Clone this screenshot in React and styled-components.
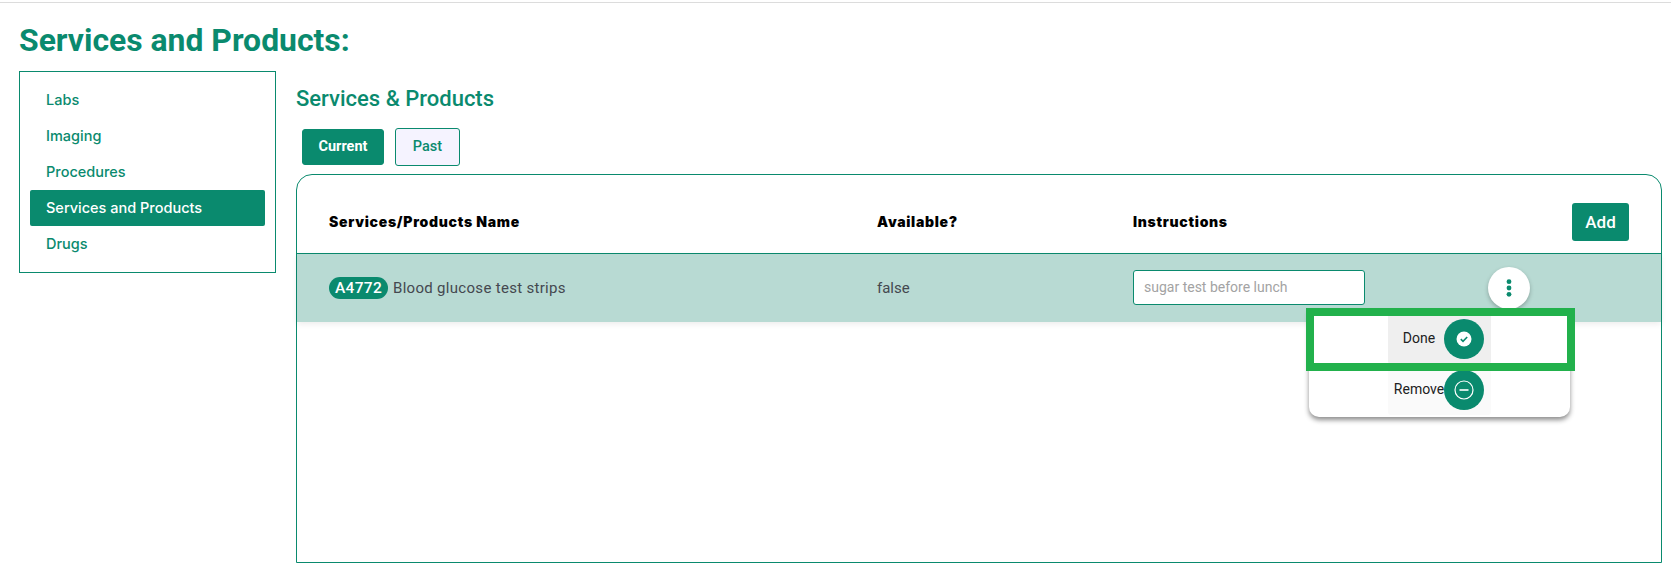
import React from 'react'
import styled, { createGlobalStyle } from 'styled-components'

const teal = '#0a8a6e'

const GlobalStyle = createGlobalStyle`
  html, body {
    margin: 0;
    padding: 0;
    background: #fff;
  }
  body {
    font-family: Roboto, "Liberation Sans", sans-serif;
    overflow: hidden;
  }
`

const Page = styled.div`
  height: 563px;
  box-sizing: border-box;
  margin-top: 2px;
  border-top: 1px solid #dcdcdc;
  padding: 0 9px 0 19px;
  overflow: hidden;
`

const Title = styled.h1`
  margin: 20px 0 0;
  height: 48px;
  font-size: 31.9px;
  line-height: 35px;
  font-weight: 700;
  color: ${teal};
`

const Layout = styled.div`
  display: flex;
  align-items: flex-start;
  gap: 20px;
`

const Sidebar = styled.ul`
  list-style: none;
  margin: 0;
  padding: 10px;
  width: 257px;
  height: 202px;
  box-sizing: border-box;
  border: 1px solid ${teal};
  flex: none;
`

const SideItem = styled.li`
  height: 36px;
  line-height: 36px;
  padding-left: 16px;
  font-family: Inter, "Open Sans", sans-serif;
  font-size: 14.5px;
  font-weight: 500;
  border-radius: 2px;
  color: ${p => (p.$active ? '#fff' : teal)};
  background: ${p => (p.$active ? teal : 'transparent')};
`

const Main = styled.div`
  flex: 1;
  min-width: 0;
`

const Heading = styled.h2`
  margin: 14px 0 0;
  height: 43px;
  font-size: 22px;
  line-height: 28px;
  font-weight: 500;
  color: ${teal};
`

const Tabs = styled.div`
  display: flex;
  align-items: center;
  gap: 11px;
  padding-left: 6px;
  height: 38px;
`

const Tab = styled.button`
  box-sizing: border-box;
  height: ${p => (p.$active ? '36px' : '38px')};
  width: ${p => (p.$active ? '82px' : '65px')};
  border: 1px solid ${teal};
  border-radius: 3px;
  padding: 0 0 2px;
  font-family: Roboto, sans-serif;
  font-size: 14.5px;
  font-weight: ${p => (p.$active ? 700 : 500)};
  color: ${p => (p.$active ? '#fff' : teal)};
  background: ${p => (p.$active ? teal : '#f5f3ff')};
`

const Card = styled.div`
  margin-top: 8px;
  height: 389px;
  box-sizing: border-box;
  border: 1px solid ${teal};
  border-radius: 16px 16px 0 0;
`

const HeaderRow = styled.div`
  display: grid;
  grid-template-columns: 548px 256px 355px 1fr;
  align-items: center;
  height: 79px;
  box-sizing: border-box;
  padding: 16px 32px 0 32px;
  border-bottom: 1px solid ${teal};
`

const HeaderCell = styled.div`
  font-family: Inter, Roboto, sans-serif;
  font-size: 14px;
  font-weight: 900;
  letter-spacing: 0.7px;
  line-height: 16px;
  color: #000;
`

const AddButton = styled.button`
  justify-self: end;
  width: 57px;
  height: 38px;
  padding: 0;
  border: 0;
  border-radius: 3px;
  background: ${teal};
  color: #fff;
  font-family: Roboto, sans-serif;
  font-size: 17px;
  font-weight: 500;
`

const DataRow = styled.div`
  position: relative;
  display: grid;
  grid-template-columns: 548px 256px 355px 1fr;
  align-items: center;
  height: 68px;
  padding-left: 32px;
  background: #b8dad3;
  box-shadow: 0 2px 6px rgba(0, 0, 0, 0.08);
  font-size: 15px;
  color: #44484f;
`

const NameCell = styled.div`
  display: flex;
  align-items: center;
  gap: 5px;
  letter-spacing: 0.3px;
`

const Code = styled.span`
  display: inline-block;
  height: 22px;
  line-height: 22px;
  padding: 0 6px;
  border-radius: 11px;
  background: ${teal};
  color: #fff;
  font-size: 15.5px;
  font-weight: 500;
`

const InstructionCell = styled.div`
  display: flex;
  margin-bottom: 2px;
`

const InstructionInput = styled.input`
  width: 232px;
  height: 35px;
  box-sizing: border-box;
  padding: 0 10px;
  border: 1px solid ${teal};
  border-radius: 3px;
  background: #fff;
  font-family: Roboto, sans-serif;
  font-size: 14px;
  outline: none;
  &::placeholder {
    color: #a3a3a3;
    opacity: 1;
  }
`

const KebabButton = styled.button`
  width: 42px;
  height: 42px;
  padding: 0;
  border: 0;
  border-radius: 50%;
  background: #fff;
  box-shadow: 0 2px 4px rgba(0, 0, 0, 0.25);
  display: flex;
  align-items: center;
  justify-content: center;
`

const Menu = styled.div`
  position: absolute;
  left: 1012px;
  top: 56px;
  width: 261px;
  height: 107px;
  box-sizing: border-box;
  padding-top: 4px;
  background: #fff;
  border-radius: 0 0 10px 10px;
  box-shadow: 0 3px 5px rgba(0, 0, 0, 0.45);
  display: flex;
  flex-direction: column;
  align-items: center;
`

const MenuItem = styled.div`
  width: 103px;
  height: ${p => (p.$active ? '50px' : '51px')};
  display: flex;
  align-items: center;
  border-radius: 3px;
  background: ${p => (p.$active ? '#efefef' : '#fafafa')};
  color: #212121;
  font-size: 14px;
`

const MenuLabel = styled.span`
  flex: 0 0 62px;
  margin-bottom: 2px;
  text-align: center;
`

const MenuIcon = styled.span`
  flex: none;
  width: 40px;
  height: 40px;
  margin-left: -6px;
  border-radius: 50%;
  background: ${teal};
  display: flex;
  align-items: center;
  justify-content: center;
  position: relative;
`

const Highlight = styled.div`
  position: absolute;
  left: 1009px;
  top: 54px;
  width: 269px;
  height: 63px;
  box-sizing: border-box;
  border: 8px solid #22b14c;
  pointer-events: none;
`

const DoneIcon = () => (
  <svg width="16" height="16" viewBox="0 0 16 16">
    <circle cx="8" cy="8" r="7.5" fill="#fff" />
    <path d="M4.8 8.2 7 10.3 11.2 6" fill="none" stroke={teal} strokeWidth="1.6" />
  </svg>
)

const RemoveIcon = () => (
  <svg width="20" height="20" viewBox="0 0 20 20">
    <circle cx="10" cy="10" r="9" fill="none" stroke="#fff" strokeWidth="1.2" />
    <path d="M5.5 10h9" fill="none" stroke="#fff" strokeWidth="1.6" />
  </svg>
)

const KebabIcon = () => (
  <svg width="6" height="18" viewBox="0 0 6 18">
    <circle cx="3" cy="2.7" r="2.4" fill={teal} />
    <circle cx="3" cy="9" r="2.4" fill={teal} />
    <circle cx="3" cy="15.3" r="2.4" fill={teal} />
  </svg>
)

const sections = ['Labs', 'Imaging', 'Procedures', 'Services and Products', 'Drugs']

const App = () => {
  return (
    <>
      <GlobalStyle />
      <Page>
        <Title>Services and Products:</Title>
        <Layout>
          <Sidebar>
            {sections.map(s => (
              <SideItem key={s} $active={s === 'Services and Products'}>
                {s}
              </SideItem>
            ))}
          </Sidebar>
          <Main>
            <Heading>Services &amp; Products</Heading>
            <Tabs>
              <Tab $active>Current</Tab>
              <Tab>Past</Tab>
            </Tabs>
            <Card>
              <HeaderRow>
                <HeaderCell>Services/Products Name</HeaderCell>
                <HeaderCell>Available?</HeaderCell>
                <HeaderCell>Instructions</HeaderCell>
                <AddButton>Add</AddButton>
              </HeaderRow>
              <DataRow>
                <NameCell>
                  <Code>A4772</Code>
                  Blood glucose test strips
                </NameCell>
                <div>false</div>
                <InstructionCell>
                  <InstructionInput placeholder="sugar test before lunch" />
                </InstructionCell>
                <div>
                  <KebabButton>
                    <KebabIcon />
                  </KebabButton>
                </div>
                <Menu>
                  <MenuItem $active>
                    <MenuLabel>Done</MenuLabel>
                    <MenuIcon>
                      <DoneIcon />
                    </MenuIcon>
                  </MenuItem>
                  <MenuItem>
                    <MenuLabel>Remove</MenuLabel>
                    <MenuIcon>
                      <RemoveIcon />
                    </MenuIcon>
                  </MenuItem>
                </Menu>
                <Highlight />
              </DataRow>
            </Card>
          </Main>
        </Layout>
      </Page>
    </>
  )
}

export default App
